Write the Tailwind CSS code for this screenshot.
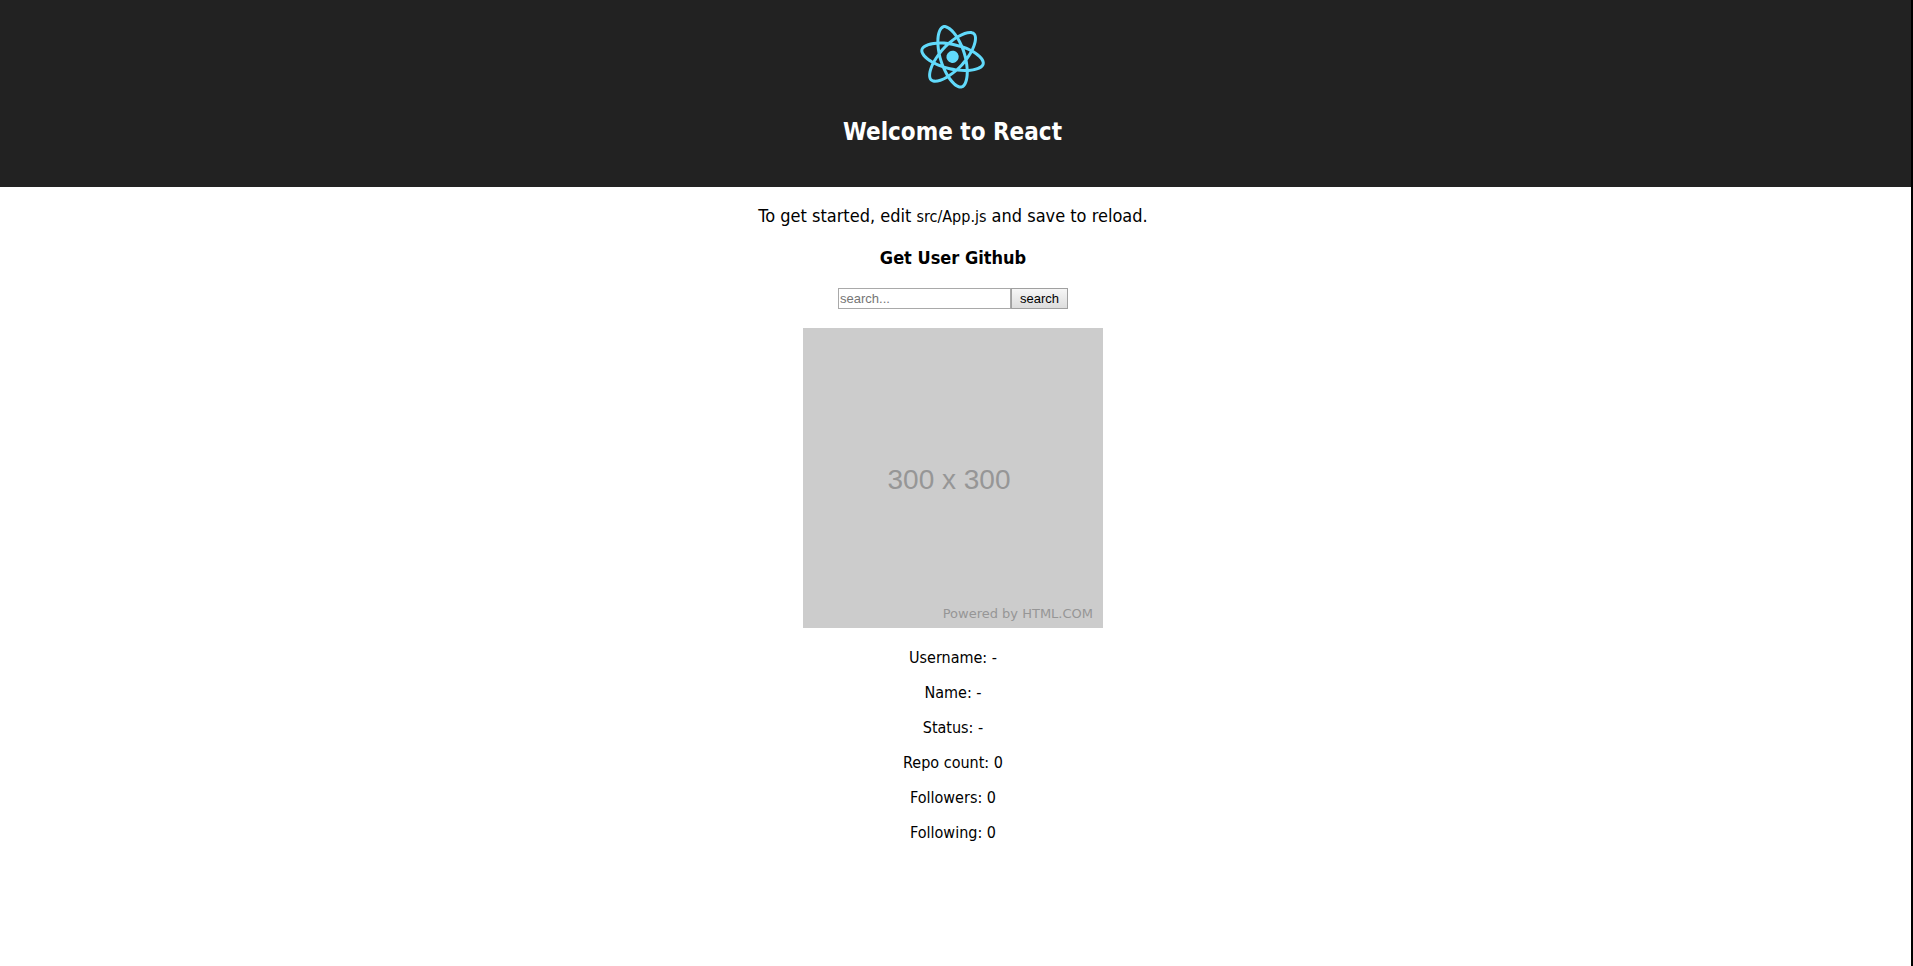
<!DOCTYPE html>
<html lang="en">
<head>
<meta charset="utf-8">
<title>React App</title>
<script src="https://cdn.jsdelivr.net/npm/@tailwindcss/browser@4"></script>
</head>
<body class="min-h-screen border-r-2 border-black bg-white text-center font-['Tahoma','DejaVu_Sans_Condensed',sans-serif] text-base text-black">
  <header class="flex flex-col items-center bg-[#222222] pt-[17px] pr-1.5 pb-[39px] text-white">
    <svg class="h-20" viewBox="0 0 841.9 595.3" role="img" aria-label="logo" overflow="visible">
      <g fill="#61DAFB" transform="rotate(13 420.9 296.5)">
        <path d="M666.3 296.5c0-32.5-40.7-63.3-103.1-82.4 14.4-63.6 8-114.2-20.2-130.4-6.5-3.8-14.1-5.6-22.4-5.6v22.3c4.6 0 8.3.9 11.4 2.6 13.6 7.8 19.5 37.5 14.9 75.7-1.1 9.4-2.9 19.3-5.1 29.4-19.6-4.8-41-8.5-63.5-10.9-13.5-18.5-27.5-35.3-41.6-50 32.6-30.3 63.2-46.9 84-46.9V78c-27.5 0-63.5 19.6-99.9 53.6-36.4-33.8-72.4-53.2-99.9-53.2v22.3c20.7 0 51.4 16.5 84 46.6-14 14.7-28 31.4-41.3 49.9-22.6 2.4-44 6.1-63.6 11-2.3-10-4-19.7-5.2-29-4.7-38.2 1.1-67.9 14.6-75.8 3-1.8 6.9-2.6 11.5-2.6V78.5c-8.4 0-16 1.8-22.6 5.6-28.1 16.2-34.4 66.7-19.9 130.1-62.2 19.2-102.7 49.9-102.7 82.3 0 32.5 40.7 63.3 103.1 82.4-14.4 63.6-8 114.2 20.2 130.4 6.5 3.8 14.1 5.6 22.5 5.6 27.5 0 63.5-19.6 99.9-53.6 36.4 33.8 72.4 53.2 99.9 53.2 8.4 0 16-1.8 22.6-5.6 28.1-16.2 34.4-66.7 19.9-130.1 62-19.1 102.5-49.9 102.5-82.3zm-130.2-66.7c-3.7 12.9-8.3 26.2-13.5 39.5-4.1-8-8.4-16-13.1-24-4.6-8-9.5-15.8-14.4-23.4 14.2 2.1 27.9 4.7 41 7.9zm-45.8 106.5c-7.8 13.5-15.8 26.3-24.1 38.2-14.9 1.3-30 2-45.2 2-15.1 0-30.2-.7-45-1.9-8.3-11.9-16.4-24.6-24.2-38-7.6-13.1-14.5-26.4-20.8-39.8 6.2-13.4 13.2-26.8 20.7-39.9 7.8-13.5 15.8-26.3 24.1-38.2 14.9-1.3 30-2 45.2-2 15.1 0 30.2.7 45 1.9 8.3 11.9 16.4 24.6 24.2 38 7.6 13.1 14.5 26.4 20.8 39.8-6.3 13.4-13.2 26.8-20.7 39.9zm32.3-13c5.4 13.4 10 26.8 13.8 39.8-13.1 3.2-26.9 5.9-41.2 8 4.9-7.7 9.8-15.6 14.4-23.7 4.6-8 8.9-16.1 13-24.1zM421.2 430c-9.3-9.6-18.6-20.3-27.8-32 9 .4 18.2.7 27.5.7 9.4 0 18.7-.2 27.8-.7-9 11.7-18.3 22.4-27.5 32zm-74.4-58.9c-14.2-2.1-27.9-4.7-41-7.9 3.7-12.9 8.3-26.2 13.5-39.5 4.1 8 8.4 16 13.1 24 4.7 8 9.5 15.8 14.4 23.4zM420.7 163c9.3 9.6 18.6 20.3 27.8 32-9-.4-18.2-.7-27.5-.7-9.4 0-18.7.2-27.8.7 9-11.7 18.3-22.4 27.5-32zm-74 58.9c-4.9 7.7-9.8 15.6-14.4 23.7-4.6 8-8.9 16-13 24-5.4-13.4-10-26.8-13.8-39.8 13.1-3.1 26.9-5.8 41.2-7.9zm-90.5 125.2c-35.4-15.1-58.3-34.9-58.3-50.6 0-15.7 22.9-35.6 58.3-50.6 8.6-3.7 18-7 27.7-10.1 5.7 19.6 13.2 40 22.5 60.9-9.2 20.8-16.6 41.1-22.2 60.6-9.9-3.1-19.3-6.5-28-10.2zM310 490c-13.6-7.8-19.5-37.5-14.9-75.7 1.1-9.4 2.9-19.3 5.1-29.4 19.6 4.8 41 8.5 63.5 10.9 13.5 18.5 27.5 35.3 41.6 50-32.6 30.3-63.2 46.9-84 46.9-4.5-.1-8.3-1-11.3-2.7zm237.2-76.2c4.7 38.2-1.1 67.9-14.6 75.8-3 1.8-6.9 2.6-11.5 2.6-20.7 0-51.4-16.5-84-46.6 14-14.7 28-31.4 41.3-49.9 22.6-2.4 44-6.1 63.6-11 2.3 10.1 4.1 19.8 5.2 29.1zm38.5-66.7c-8.6 3.7-18 7-27.7 10.1-5.7-19.6-13.2-40-22.5-60.9 9.2-20.8 16.6-41.1 22.2-60.6 9.9 3.1 19.3 6.5 28.1 10.2 35.4 15.1 58.3 34.9 58.3 50.6-.1 15.7-23 35.6-58.4 50.6z"/>
        <circle cx="420.9" cy="296.5" r="45.7"/>
      </g>
    </svg>
    <h1 class="mt-[19px] text-2xl font-bold">Welcome to React</h1>
  </header>
  <main class="flex flex-col items-center pr-[5px]">
    <p class="mt-[15px] text-lg">To get started, edit <code class="font-['Tahoma','DejaVu_Sans_Condensed',sans-serif] text-base">src/App.js</code> and save to reload.</p>
    <h2 class="mt-3.5 text-lg font-bold">Get User Github</h2>
    <form class="mt-4 flex font-['Liberation_Sans',Arial,sans-serif] text-[13px] leading-4" onsubmit="return false">
      <input type="text" aria-label="Search" placeholder="search..." class="h-[21px] w-[173px] border border-[#a9a9a9] px-px placeholder:text-[#757575]">
      <button type="submit" class="h-[21px] w-[57px] border border-[#a0a0a0] bg-linear-to-b from-[#f6f6f6] to-[#dddddd]">search</button>
    </form>
    <div role="img" aria-label="300 x 300 placeholder" class="mt-[19px] flex h-[300px] w-[300px] flex-col justify-between bg-[#cccccc] text-[#969696]">
      <span class="pt-[132px] pr-2 font-['Liberation_Sans_Narrow','Liberation_Sans',sans-serif] text-[28px] leading-10">300 x 300</span>
      <span class="pr-2.5 pb-1 text-right font-['DejaVu_Sans',sans-serif] text-[13px] leading-5">Powered by HTML.COM</span>
    </div>
    <div class="mt-[18px] flex flex-col gap-[11px]">
      <p>Username: -</p>
      <p>Name: -</p>
      <p>Status: -</p>
      <p>Repo count: 0</p>
      <p>Followers: 0</p>
      <p>Following: 0</p>
    </div>
  </main>
</body>
</html>
